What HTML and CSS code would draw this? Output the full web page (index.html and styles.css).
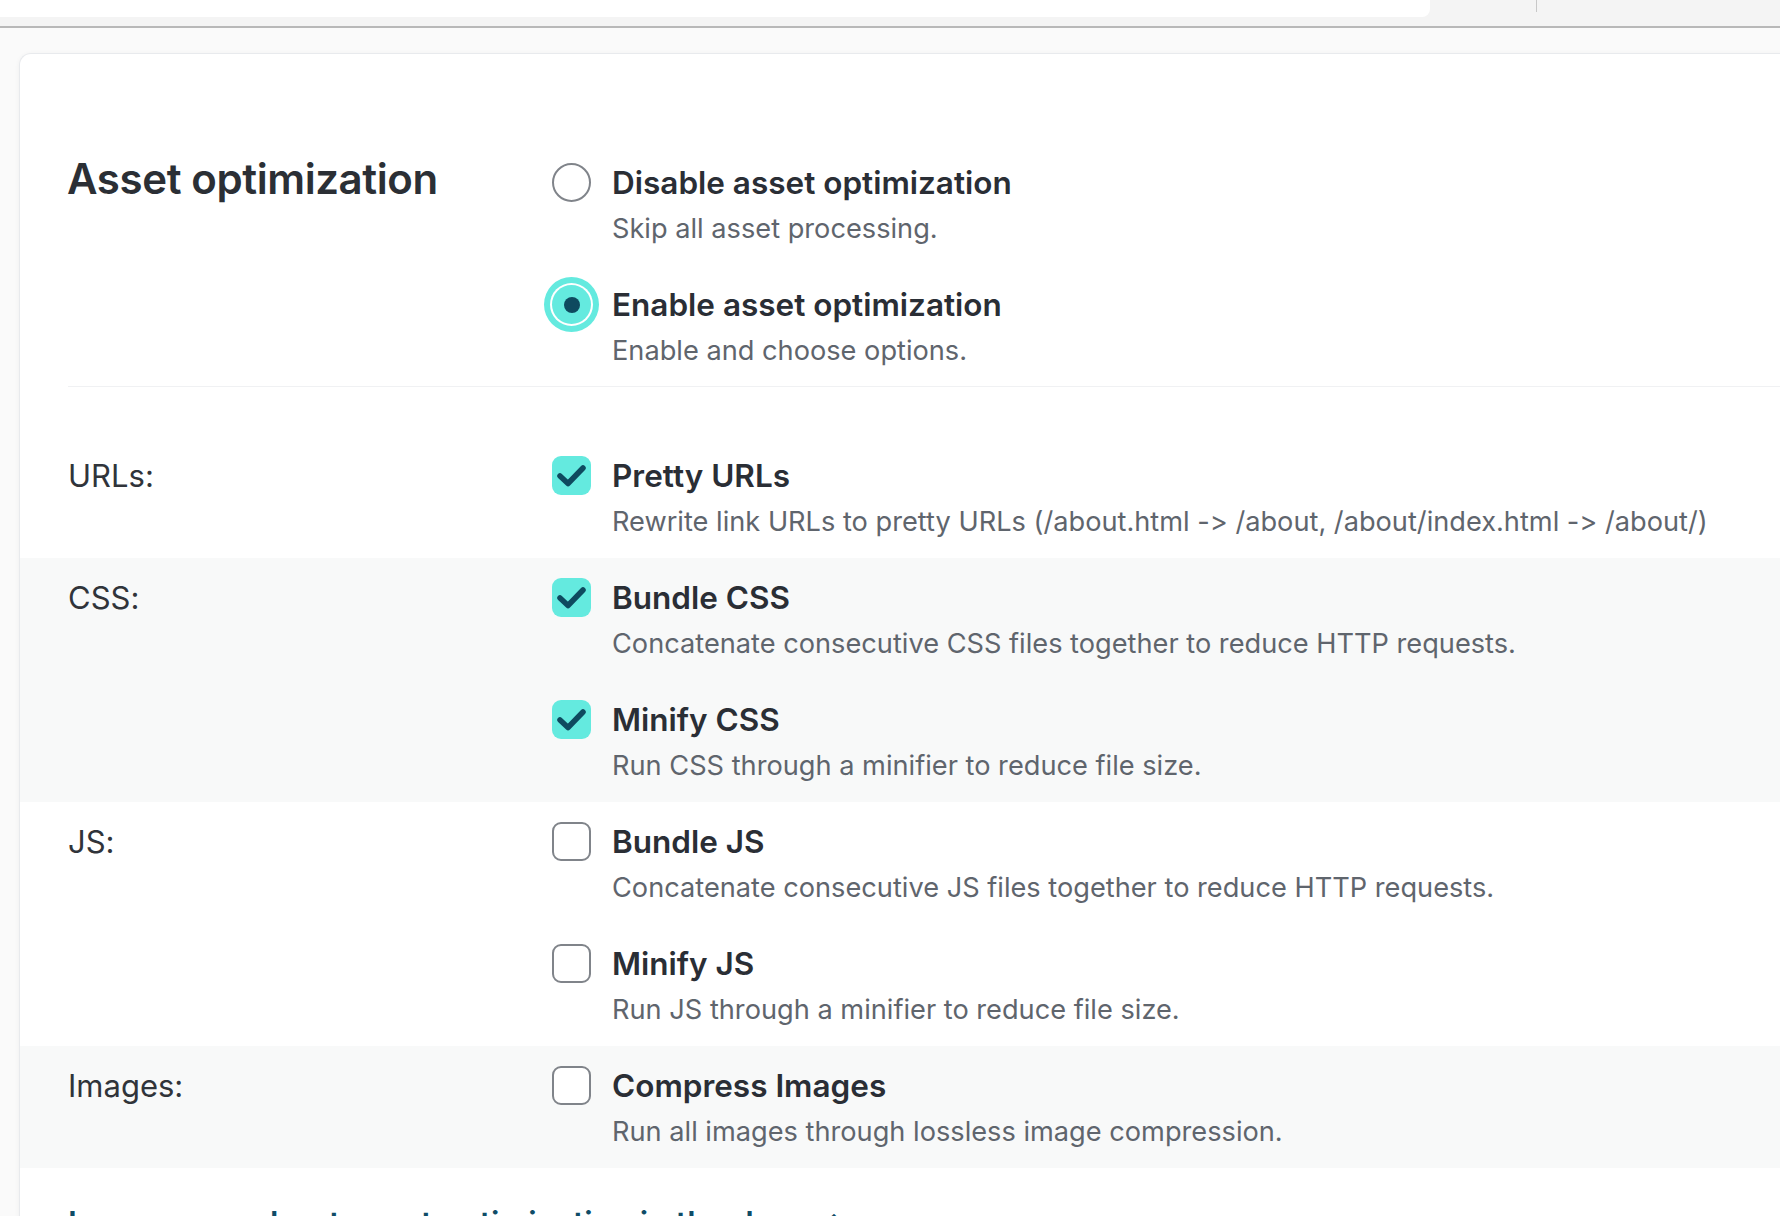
FILE: index.html
```html
<!DOCTYPE html>
<html lang="en">
<head>
<meta charset="utf-8">
<title>Asset optimization</title>
<link rel="stylesheet" href="styles.css">
</head>
<body>
<div class="chrome">
  <div class="chrome-url"></div>
  <div class="chrome-tools"><span class="chrome-sep"></span></div>
</div>
<main class="page">
  <section class="card">
    <div class="intro">
      <h2 class="title">Asset optimization</h2>
      <div class="options">
        <div class="option">
          <span class="radio"></span>
          <div class="opt-text">
            <div class="opt-title">Disable asset optimization</div>
            <div class="opt-desc">Skip all asset processing.</div>
          </div>
        </div>
        <div class="option">
          <span class="radio radio-on"><span class="radio-dot"></span></span>
          <div class="opt-text">
            <div class="opt-title">Enable asset optimization</div>
            <div class="opt-desc">Enable and choose options.</div>
          </div>
        </div>
      </div>
    </div>

    <div class="groups">
      <div class="group">
        <div class="group-label">URLs:</div>
        <div class="options">
          <div class="option">
            <span class="check check-on"><svg viewBox="0 0 39 39" class="tick"><path d="M8 20 L16 27.5 L31 12"/></svg></span>
            <div class="opt-text">
              <div class="opt-title">Pretty URLs</div>
              <div class="opt-desc">Rewrite link URLs to pretty URLs (/about.html -&gt; /about, /about/index.html -&gt; /about/)</div>
            </div>
          </div>
        </div>
      </div>

      <div class="group group-shaded">
        <div class="group-label">CSS:</div>
        <div class="options">
          <div class="option">
            <span class="check check-on"><svg viewBox="0 0 39 39" class="tick"><path d="M8 20 L16 27.5 L31 12"/></svg></span>
            <div class="opt-text">
              <div class="opt-title">Bundle CSS</div>
              <div class="opt-desc">Concatenate consecutive CSS files together to reduce HTTP requests.</div>
            </div>
          </div>
          <div class="option">
            <span class="check check-on"><svg viewBox="0 0 39 39" class="tick"><path d="M8 20 L16 27.5 L31 12"/></svg></span>
            <div class="opt-text">
              <div class="opt-title">Minify CSS</div>
              <div class="opt-desc">Run CSS through a minifier to reduce file size.</div>
            </div>
          </div>
        </div>
      </div>

      <div class="group">
        <div class="group-label">JS:</div>
        <div class="options">
          <div class="option">
            <span class="check"></span>
            <div class="opt-text">
              <div class="opt-title">Bundle JS</div>
              <div class="opt-desc">Concatenate consecutive JS files together to reduce HTTP requests.</div>
            </div>
          </div>
          <div class="option">
            <span class="check"></span>
            <div class="opt-text">
              <div class="opt-title">Minify JS</div>
              <div class="opt-desc">Run JS through a minifier to reduce file size.</div>
            </div>
          </div>
        </div>
      </div>

      <div class="group group-shaded">
        <div class="group-label">Images:</div>
        <div class="options">
          <div class="option">
            <span class="check"></span>
            <div class="opt-text">
              <div class="opt-title">Compress Images</div>
              <div class="opt-desc">Run all images through lossless image compression.</div>
            </div>
          </div>
        </div>
      </div>
    </div>

    <a class="docs-link" href="#">Learn more about asset optimization in the docs →</a>
  </section>
</main>
</body>
</html>
```

FILE: styles.css
```css
* { box-sizing: border-box; }

html, body {
  margin: 0;
  padding: 0;
}

body {
  background: #fafafa;
  font-family: Inter, "Noto Sans", "Liberation Sans", sans-serif;
  font-feature-settings: "calt" 0, "liga" 0;
  font-variant-ligatures: none;
  color: #2b2f35;
  overflow: hidden;
}

/* browser chrome strip */
.chrome {
  height: 28px;
  background: #f4f4f4;
  border-bottom: 2px solid #b8b8b8;
  display: flex;
}

.chrome-url {
  width: 1430px;
  height: 17px;
  background: #ffffff;
  border-bottom-right-radius: 8px;
}

.chrome-tools {
  flex: 1;
  display: flex;
  padding-left: 106px;
}

.chrome-sep {
  width: 1px;
  height: 12px;
  background: #c8c8c8;
}

/* page */
.page {
  padding: 25px 0 0 19px;
}

.card {
  background: #ffffff;
  border: 1px solid #e8eaed;
  border-right: none;
  border-radius: 12px 0 0 0;
  margin-right: -30px;
  padding-top: 105px;
  box-shadow: 0 1px 5px rgba(0, 0, 0, 0.05);
}

.intro {
  display: grid;
  grid-template-columns: 484px 1fr;
  margin-left: 48px;
  padding-bottom: 15px;
  border-bottom: 1px solid #f0f1f3;
}

.title {
  margin: -4px 0 0 -1px;
  font-size: 42px;
  line-height: 48px;
  font-weight: 600;
  letter-spacing: -0.4px;
  color: #2b2f35;
}

.options {
  display: flex;
  flex-direction: column;
  gap: 32px;
}

.option {
  display: flex;
  align-items: flex-start;
  gap: 21px;
}

.opt-title {
  font-size: 31.5px;
  line-height: 48px;
  font-weight: 600;
  color: #2a2e35;
}

.opt-desc {
  margin-top: 2px;
  font-size: 27.2px;
  line-height: 40px;
  color: #5f656d;
}

/* radio */
.radio {
  flex: none;
  width: 39px;
  height: 39px;
  margin-top: 4px;
  border: 2px solid #80848a;
  border-radius: 50%;
  background: #ffffff;
  display: flex;
  align-items: center;
  justify-content: center;
}

.radio-on {
  border: none;
  background: #64eadf;
  box-shadow: 0 0 0 2px #ffffff, 0 0 0 8px #64eadf;
}

.radio-dot {
  width: 16px;
  height: 16px;
  border-radius: 50%;
  background: #0e4a5f;
}

/* checkbox */
.check {
  flex: none;
  width: 39px;
  height: 39px;
  margin-top: 4px;
  border: 2px solid #80848a;
  border-radius: 9px;
  background: #ffffff;
}

.check-on {
  border: none;
  background: #64eadf;
}

.tick {
  display: block;
  width: 39px;
  height: 39px;
}

.tick path {
  fill: none;
  stroke: #0e4a5f;
  stroke-width: 5.5;
  stroke-linecap: round;
  stroke-linejoin: round;
}

/* groups */
.groups {
  margin-top: 49px;
}

.group {
  display: grid;
  grid-template-columns: 484px 1fr;
  padding: 16px 0 16px 48px;
}

.group-shaded {
  background: #f8f9f9;
}

.group-label {
  font-size: 31px;
  line-height: 48px;
  color: #30343a;
}

.docs-link {
  display: block;
  margin: 32px 0 0 48px;
  font-size: 32px;
  line-height: 48px;
  font-weight: 600;
  color: #0f4c67;
  text-decoration: none;
}
```
